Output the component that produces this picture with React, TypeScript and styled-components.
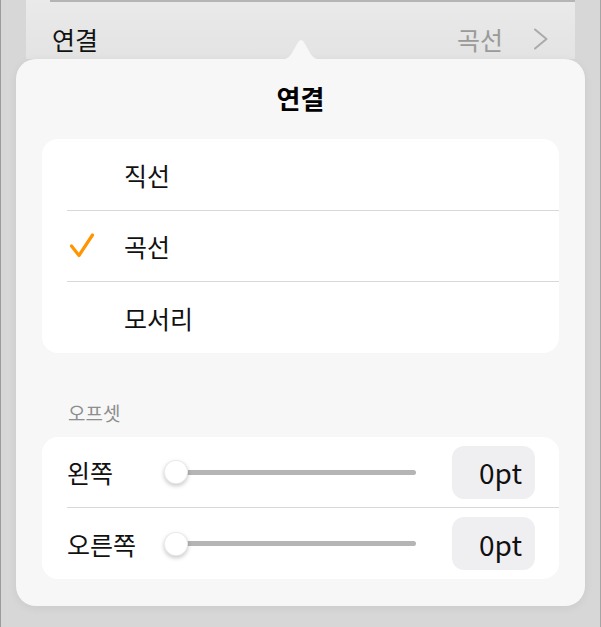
import React from "react";
import styled, { createGlobalStyle } from "styled-components";

const Global = createGlobalStyle`
  html, body { margin: 0; padding: 0; }
  body {
    background: #d6d7d6;
    font-family: "Noto Sans CJK KR", "Noto Sans", sans-serif;
    -webkit-font-smoothing: antialiased;
  }
`;

const Frame = styled.div`
  width: 601px;
  height: 627px;
  box-sizing: border-box;
  border-left: 1px solid #9a9b9a;
  border-right: 1px solid #a4a5a4;
  background: #d6d7d6;
  display: flex;
  flex-direction: column;
  overflow: hidden;
`;

const HeaderCell = styled.div`
  flex-shrink: 0;
  margin: 0 25px;
  height: 59px;
  display: flex;
  flex-direction: column;
  background: linear-gradient(#e9eae9, #e2e3e2);
`;

const TopRule = styled.div`
  height: 2px;
  margin-left: 24px;
  background: #b4b5b4;
`;

const HeaderRow = styled.div`
  flex: 1;
  display: flex;
  align-items: center;
  padding: 16px 26px 0 26px;
`;

const HeaderLabel = styled.span`
  font-size: 25px;
  color: #111;
  flex: 1;
`;

const HeaderValue = styled.span`
  font-size: 25px;
  color: #9a9a9a;
  margin-right: 30px;
`;

const Popover = styled.div`
  flex-shrink: 0;
  position: relative;
  margin: 0 15px;
  height: 547px;
  box-sizing: border-box;
  background: #f7f7f7;
  border-radius: 20px;
  padding: 0 26px 27px 26px;
  display: flex;
  flex-direction: column;
  box-shadow: 0 2px 10px rgba(0, 0, 0, 0.06);
`;

const Arrow = styled.svg`
  position: absolute;
  left: 261px;
  bottom: 100%;
  margin-bottom: -1px;
  display: block;
`;

const Title = styled.h1`
  flex-shrink: 0;
  margin: 0;
  padding-top: 24px;
  height: 56px;
  line-height: 30px;
  text-align: center;
  font-size: 26px;
  font-weight: 700;
  color: #000;
`;

const Card = styled.div<{ $top: number }>`
  flex-shrink: 0;
  margin-top: ${(p) => p.$top}px;
  background: #ffffff;
  border-radius: 16px;
  display: flex;
  flex-direction: column;
  overflow: hidden;
`;

const ChoiceRow = styled.div<{ $h: number }>`
  flex-shrink: 0;
  height: ${(p) => p.$h}px;
  display: flex;
  align-items: center;
`;

const Separator = styled.div`
  flex-shrink: 0;
  height: 1px;
  margin-left: 25px;
  background: #d8d8d8;
`;

const CheckSlot = styled.div`
  width: 82px;
  padding-left: 27px;
  box-sizing: border-box;
  display: flex;
  align-items: center;
`;

const ChoiceText = styled.span`
  font-size: 25px;
  color: #111;
`;

const SectionLabel = styled.div`
  flex-shrink: 0;
  margin-top: 50px;
  padding-left: 26px;
  font-size: 19px;
  line-height: 20px;
  color: #8e8e8e;
`;

const SliderRow = styled.div<{ $h: number }>`
  flex-shrink: 0;
  height: ${(p) => p.$h}px;
  display: flex;
  align-items: center;
  padding: 0 24px 0 25px;
`;

const SliderLabel = styled.span`
  width: 97px;
  font-size: 25px;
  color: #111;
`;

const Track = styled.div`
  position: relative;
  width: 252px;
  height: 24px;
  display: flex;
  align-items: center;
`;

const TrackLine = styled.div`
  margin-left: 8px;
  flex: 1;
  height: 5px;
  border-radius: 3px;
  background: #b5b5b5;
`;

const Thumb = styled.div`
  position: absolute;
  left: 0;
  top: 0;
  width: 24px;
  height: 24px;
  border-radius: 50%;
  background: #fff;
  box-sizing: border-box;
  border: 0.5px solid rgba(0, 0, 0, 0.08);
  box-shadow: 0 2px 4px rgba(0, 0, 0, 0.22);
`;

const ValueBox = styled.div`
  margin-left: auto;
  width: 83px;
  height: 53px;
  border-radius: 12px;
  background: #efeff2;
  display: flex;
  align-items: center;
  justify-content: flex-end;
  padding-right: 13px;
  box-sizing: border-box;
  font-size: 28px;
  color: #111;
`;

const choices = [
  { label: "직선", checked: false, h: 71 },
  { label: "곡선", checked: true, h: 70 },
  { label: "모서리", checked: false, h: 71 },
];

const sliders = [
  { label: "왼쪽", h: 70 },
  { label: "오른쪽", h: 71 },
];

export default function App() {
  return (
    <>
      <Global />
      <Frame>
        <HeaderCell>
          <TopRule />
          <HeaderRow>
            <HeaderLabel>연결</HeaderLabel>
            <HeaderValue>곡선</HeaderValue>
            <svg width="16" height="22" viewBox="0 0 16 22">
              <path d="M2 1.5 L13.5 11 L2 20.5" fill="none" stroke="#aaaaaa" strokeWidth="2" strokeLinecap="round" strokeLinejoin="round" />
            </svg>
          </HeaderRow>
        </HeaderCell>
        <Popover>
          <Arrow width="48" height="22" viewBox="0 0 48 22">
            <path d="M0 22 C8 22 12 20 15 15 L20.5 5 Q24 -1 27.5 5 L33 15 C36 20 40 22 48 22 Z" fill="#f7f7f7" />
          </Arrow>
          <Title>연결</Title>
          <Card $top={0}>
            {choices.map((c, i) => (
              <React.Fragment key={c.label}>
                {i > 0 && <Separator />}
                <ChoiceRow $h={c.h}>
                  <CheckSlot>
                    {c.checked && (
                      <svg width="26" height="26" viewBox="0 0 26 26">
                        <path d="M2.5 13 L10 22.5 L23.5 2" fill="none" stroke="#ff9500" strokeWidth="3.2" strokeLinecap="round" strokeLinejoin="round" />
                      </svg>
                    )}
                  </CheckSlot>
                  <ChoiceText>{c.label}</ChoiceText>
                </ChoiceRow>
              </React.Fragment>
            ))}
          </Card>
          <SectionLabel>오프셋</SectionLabel>
          <Card $top={14}>
            {sliders.map((s, i) => (
              <React.Fragment key={s.label}>
                {i > 0 && <Separator />}
                <SliderRow $h={s.h}>
                  <SliderLabel>{s.label}</SliderLabel>
                  <Track>
                    <TrackLine />
                    <Thumb />
                  </Track>
                  <ValueBox>0pt</ValueBox>
                </SliderRow>
              </React.Fragment>
            ))}
          </Card>
        </Popover>
      </Frame>
    </>
  );
}
